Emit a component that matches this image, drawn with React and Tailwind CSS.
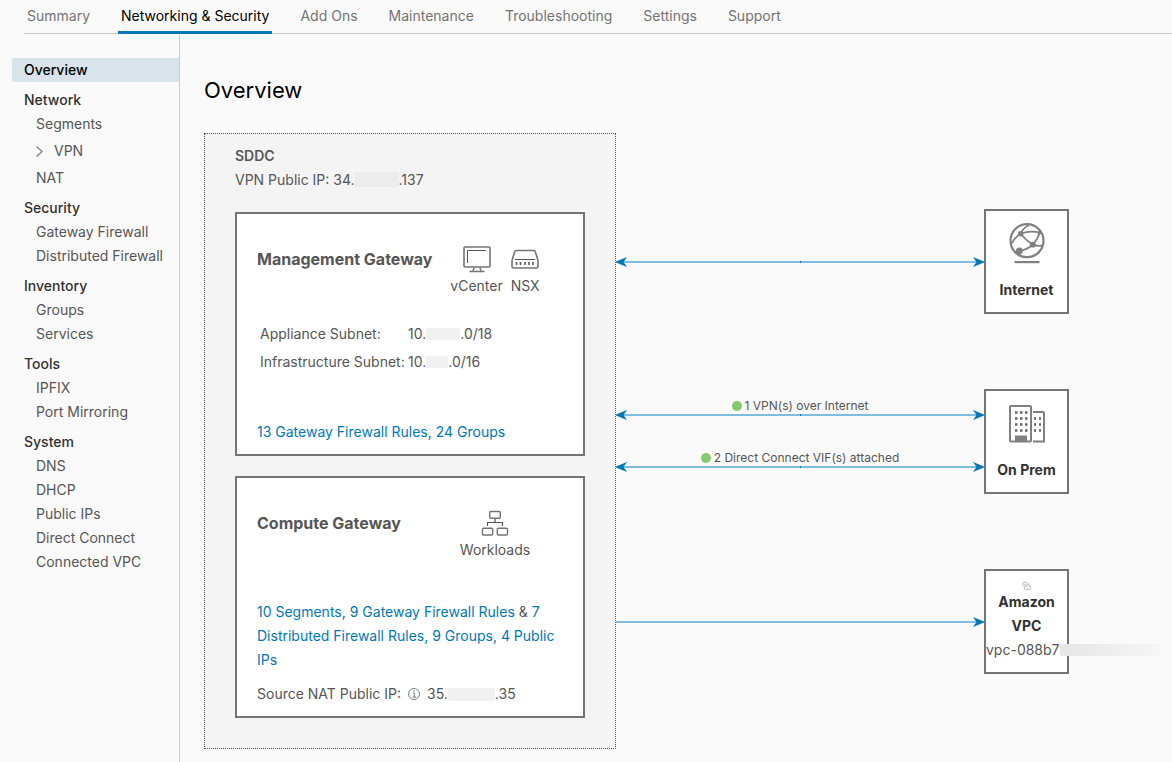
// App.jsx
import React from 'react';

const tabs = ['Summary', 'Networking & Security', 'Add Ons', 'Maintenance', 'Troubleshooting', 'Settings', 'Support'];

const sections = [
  { title: 'Network', items: ['Segments', 'VPN', 'NAT'] },
  { title: 'Security', items: ['Gateway Firewall', 'Distributed Firewall'] },
  { title: 'Inventory', items: ['Groups', 'Services'] },
  { title: 'Tools', items: ['IPFIX', 'Port Mirroring'] },
  { title: 'System', items: ['DNS', 'DHCP', 'Public IPs', 'Direct Connect', 'Connected VPC'] },
];

const TopTabs = () => (
  <nav className="ml-6 flex h-[34px] gap-[25px] border-b border-[#ccc] whitespace-nowrap">
    {tabs.map((tab) => (
      <a
        key={tab}
        href="#"
        className={
          tab === 'Networking & Security'
            ? 'h-[34px] border-b-3 border-[#0079b8] px-[3px] leading-8 text-black'
            : 'h-[34px] px-[3px] leading-8 text-[#747474]'
        }
      >
        {tab}
      </a>
    ))}
  </nav>
);

const SideNav = () => (
  <nav className="w-[180px] shrink-0 border-r border-[#ccc] pt-6 pl-3 whitespace-nowrap">
    <a href="#" className="block rounded-l-xs bg-[#d9e4ea] pl-3 font-medium text-black">
      Overview
    </a>
    {sections.map((section) => (
      <div key={section.title} className="mt-1.5 pl-3">
        <div className="font-medium text-[#313131]">{section.title}</div>
        <ul className="pl-3">
          {section.items.map((item) => (
            <li key={item}>
              {item === 'VPN' ? (
                <a href="#" className="flex h-[30px] items-center">
                  <svg className="mr-2.5 h-3 w-2" viewBox="0 0 8 12" fill="none" stroke="#8c8c8c" strokeWidth="1.5">
                    <path d="M0.500 1.500 6 6.500 0.500 11.500" />
                  </svg>
                  VPN
                </a>
              ) : (
                <a href="#">{item}</a>
              )}
            </li>
          ))}
        </ul>
      </div>
    ))}
  </nav>
);

const MonitorIcon = () => (
  <svg className="h-7 w-7" viewBox="0 0 28 28" fill="none" stroke="#747474">
    <rect x="1" y="1" width="26" height="20" rx="1" strokeWidth="1.6" />
    <path d="M4.5 17V4.5H23" stroke="#565656" />
    <path d="M11 21.5 10 25M17 21.5 18 25M6.500 25.500H21.500" strokeWidth="1.4" />
  </svg>
);

const SwitchIcon = () => (
  <svg className="h-7 w-7" viewBox="0 0 28 28" fill="none" stroke="#747474">
    <path d="M5.500 4.500H22.500Q24 4.500 24.400 6L27 14.500V20.500Q27 22 25.500 22H2.500Q1 22 1 20.500V14.500L3.600 6Q4 4.500 5.500 4.500Z" strokeWidth="1.6" />
    <path d="M4 13.500H24" stroke="#565656" />
    <path d="M5.500 16V19M9.500 16V19M14 16V19M18 16V19M22 16V19" strokeWidth="1.6" stroke="#565656" />
  </svg>
);

const WorkloadsIcon = () => (
  <svg className="h-7 w-7" viewBox="0 0 28 28" fill="none" stroke="#747474" strokeWidth="1.4">
    <rect x="8.700" y="1.500" width="10.600" height="6.800" rx="1" />
    <rect x="1.500" y="18.200" width="10.200" height="6.800" rx="1" />
    <rect x="16.300" y="18.200" width="10.200" height="6.800" rx="1" />
    <path d="M14 8.500V12.500M6.500 16V12.500H21.500V16" stroke="#565656" strokeWidth="1.200" />
  </svg>
);

const GlobeIcon = () => (
  <svg className="h-[42px] w-9" viewBox="0 0 36 42" fill="none" stroke="#808080" strokeWidth="1.800">
    <circle cx="18" cy="17.700" r="16.500" strokeWidth="2.200" />
    <path d="M2.500 20.500Q6 14 11.700 10.700M11.700 10.700Q14 5 20 2M11.700 10.700Q22 7 31 10M11.700 10.700Q16.500 17 23.700 21.700M30.700 9.500Q29 16 23.700 21.700M23.700 21.700Q18 27 10.300 28M23.700 21.700Q29 23.500 33.500 22.500" />
    <g fill="#808080" stroke="none">
      <circle cx="11.700" cy="10.700" r="2.700" />
      <circle cx="23.700" cy="21.700" r="2.900" />
      <circle cx="10.300" cy="28" r="3.400" />
      <circle cx="30.500" cy="9.500" r="1.900" />
      <rect x="5.500" y="38" width="25" height="2.200" />
    </g>
  </svg>
);

const BuildingIcon = () => (
  <svg className="h-[42px] w-[38px]" viewBox="0 0 38 42" fill="none" stroke="#808080" strokeWidth="2">
    <rect x="2" y="3" width="21" height="35.500" rx="1" />
    <path d="M25 9H35Q36 9 36 10V38.500H25" />
    <path
      d="M7 9.500H9.500M12 9.500H14.500M17 9.500H19.500M7 15.500H9.500M12 15.500H14.500M17 15.500H19.500M7 21.500H9.500M12 21.500H14.500M17 21.500H19.500M7 27.500H9.500M12 27.500H14.500M17 27.500H19.500M26 15.500H28M31 15.500H33M26 21.500H28M31 21.500H33M26 27.500H28M31 27.500H33"
      stroke="#666"
      strokeWidth="2.500"
    />
    <path d="M8 37V33.500H18V37Z" fill="#808080" />
  </svg>
);

const CloudIcon = () => (
  <svg className="h-[9px] w-[9px]" viewBox="0 0 9 9" fill="none" stroke="#999" strokeWidth="0.700">
    <path d="M1.500 5A2 2 0 0 1 1 2.500 1.500 1.500 0 0 1 3 1.500 1.700 1.700 0 0 1 5.500 2L7 4M3.500 8.300A1.600 1.600 0 0 1 3.300 5.200 2 2 0 0 1 7 5 1.600 1.600 0 0 1 7.500 8.300ZM2 3 5.500 6.500" />
  </svg>
);

const InfoIcon = () => (
  <svg className="inline-block h-3 w-3" viewBox="0 0 12 12" fill="none" stroke="#747474">
    <circle cx="6" cy="6" r="5.500" strokeWidth="0.900" />
    <path d="M5 5H6.300V8.800M4.500 9H8" />
    <path d="M5.500 3H6.700" stroke="#0079b8" />
  </svg>
);

// covers the masked part of an address
const Masked = ({ className }) => <span className={`inline-block ${className}`} />;

const ArrowHead = ({ flip }) => (
  <svg className={flip ? 'h-2.5 w-3 shrink-0 rotate-180' : 'h-2.5 w-3 shrink-0'} viewBox="0 0 12 10">
    <path d="M0 4H5V6H0Z" fill="#80bcdb" />
    <path d="M1 0 12 4.500V5.500L1 10 4.500 5Z" fill="#0079b8" />
  </svg>
);

const Connector = ({ label, oneWay }) => (
  <div className="w-full">
    {label && (
      <div className="-mb-1 flex items-center justify-center gap-[3px] text-xs">
        <span className="h-2.5 w-2.5 rounded-full bg-[#85c96e]" />
        {label}
      </div>
    )}
    <div className="flex items-center">
      {!oneWay && <ArrowHead flip />}
      <div className="flex h-0.5 flex-1 justify-center bg-[#80bcdb]">
        {!oneWay && <span className="h-0.5 w-px bg-[#0079b8]" />}
      </div>
      <ArrowHead />
    </div>
  </div>
);

const Endpoint = ({ children }) => (
  <div className="flex h-[105px] w-[85px] shrink-0 flex-col items-center border-2 border-[#747474] bg-white font-bold text-[#313131]">
    {children}
  </div>
);

const Component = ({ icon, name }) => (
  <div className="flex flex-col items-center">
    {icon}
    <span>{name}</span>
  </div>
);

const GatewayCard = ({ title, components, children }) => (
  <section className="border-2 border-[#747474] bg-white px-5 pt-8 pb-2.5">
    <div className="flex whitespace-nowrap">
      <h2 className="min-w-0 flex-1 text-base leading-[26px] font-bold">{title}</h2>
      <div className="flex w-[136px] justify-center gap-2">{components}</div>
    </div>
    {children}
  </section>
);

const Link = ({ children }) => (
  <a href="#" className="text-[#0079b8]">
    {children}
  </a>
);

const App = () => {
  return (
    <div className="flex min-h-screen flex-col bg-[#fafafa] font-['Inter','Open_Sans',sans-serif] text-sm leading-6 text-[#565656]">
      <TopTabs />
      <div className="flex flex-1">
        <SideNav />
        <main className="flex-1 pt-10 pr-[103px] pb-3 pl-6">
          <h1 className="text-[22px] leading-8 text-black">Overview</h1>
          <div className="mt-[27px] flex">
            <div className="w-[412px] shrink-0 border border-dotted border-[#565656] bg-[#f4f4f4] px-[30px] pt-2.5 pb-[30px]">
              <div className="font-semibold">SDDC</div>
              <div className="h-6">
                VPN Public IP: 34.
                <Masked className="h-[15px] w-11 bg-[#ececec] align-[-2px]" />
                .137
              </div>
              <div className="mt-5 flex flex-col gap-5">
                <GatewayCard
                  title="Management Gateway"
                  components={
                    <>
                      <Component icon={<MonitorIcon />} name="vCenter" />
                      <Component icon={<SwitchIcon />} name="NSX" />
                    </>
                  }
                >
                  <table className="mt-[22px] ml-[3px] leading-7 whitespace-nowrap">
                    <tbody>
                      <tr>
                        <th className="w-[148px] text-left font-normal">Appliance Subnet:</th>
                        <td>
                          10.
                          <Masked className="h-3 w-[34px] bg-[#f1f1f1] align-[-1px]" />
                          .0/18
                        </td>
                      </tr>
                      <tr>
                        <th className="w-[148px] text-left font-normal">Infrastructure Subnet:</th>
                        <td>
                          10.
                          <Masked className="h-3 w-[22px] bg-[#f1f1f1] align-[-1px]" />
                          .0/16
                        </td>
                      </tr>
                    </tbody>
                  </table>
                  <p className="mt-11">
                    <Link>13 Gateway Firewall Rules,</Link> <Link>24 Groups</Link>
                  </p>
                </GatewayCard>
                <GatewayCard
                  title="Compute Gateway"
                  components={<Component icon={<WorkloadsIcon />} name="Workloads" />}
                >
                  <p className="mt-[38px]">
                    <Link>10 Segments,</Link> <Link>9 Gateway Firewall Rules</Link> &amp;{' '}
                    <Link>7 Distributed Firewall Rules,</Link> <Link>9 Groups,</Link> <Link>4 Public IPs</Link>
                  </p>
                  <div className="mt-2.5 flex items-center whitespace-nowrap">
                    Source NAT Public IP:
                    <button type="button" aria-label="Source NAT info" className="mx-[7px] flex">
                      <InfoIcon />
                    </button>
                    35.
                    <Masked className="h-[13px] w-[47px] bg-[#f1f1f1]" />
                    .35
                  </div>
                </GatewayCard>
              </div>
            </div>

            <div className="flex flex-1 flex-col gap-[75px] pt-[76px]">
              <div className="flex items-center">
                <Connector />
                <Endpoint>
                  <div className="pt-3 pb-[13px]">
                    <GlobeIcon />
                  </div>
                  <span>Internet</span>
                </Endpoint>
              </div>
              <div className="flex">
                <div className="flex flex-1 flex-col gap-[30px] pt-[9px]">
                  <Connector label="1 VPN(s) over Internet" />
                  <Connector label="2 Direct Connect VIF(s) attached" />
                </div>
                <Endpoint>
                  <div className="pt-3 pb-[13px]">
                    <BuildingIcon />
                  </div>
                  <span>On Prem</span>
                </Endpoint>
              </div>
              <div className="flex items-center">
                <Connector oneWay />
                <Endpoint>
                  <div className="pt-2.5">
                    <CloudIcon />
                  </div>
                  <span>Amazon</span>
                  <span>VPC</span>
                  <span className="flex w-full items-center font-normal whitespace-nowrap text-[#565656]">
                    vpc-088b7
                    <Masked className="h-3 w-[100px] shrink-0 bg-linear-to-r from-[#e6e6e6] to-[#f6f6f6]" />
                  </span>
                </Endpoint>
              </div>
            </div>
          </div>
        </main>
      </div>
    </div>
  );
};

export default App;
